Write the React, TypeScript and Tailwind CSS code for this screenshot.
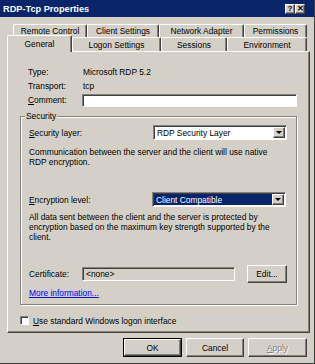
import React from "react";

const raised =
  "border border-t-white border-l-white border-r-[#404040] border-b-[#404040] shadow-[inset_-1px_-1px_0_#808080]";
const sunken =
  "border border-t-[#808080] border-l-[#808080] border-r-white border-b-white shadow-[inset_1px_1px_0_#404040]";

function Tab({ label, w, active }: { label: string; w: string; active?: boolean }) {
  return (
    <div
      className={`${w} ${
        active ? "h-[17px] -mb-px relative z-10" : "h-full"
      } shrink-0 bg-[#d4d0c8] border-t border-l border-r border-t-white border-l-white border-r-[#404040] rounded-t-[2px] shadow-[inset_-1px_0_0_#808080] flex items-center justify-center`}
    >
      {label}
    </div>
  );
}

function Select({ value, highlight }: { value: string; highlight?: boolean }) {
  return (
    <div className={`w-[134px] h-[15px] bg-white ${sunken} flex items-center p-[1px]`}>
      <div className="flex-1 h-full flex items-center">
        <span
          className={`h-full flex items-center pl-[2px] ${
            highlight ? "bg-[#0a246a] text-white w-[118px]" : ""
          }`}
        >
          {value}
        </span>
      </div>
      <div className={`w-[12px] h-full bg-[#d4d0c8] ${raised} flex items-center justify-center`}>
        <div className="w-0 h-0 border-l-[3px] border-r-[3px] border-t-[3px] border-l-transparent border-r-transparent border-t-black" />
      </div>
    </div>
  );
}

function Button({ children, w, def, disabled }: { children: React.ReactNode; w: string; def?: boolean; disabled?: boolean }) {
  return (
    <div className={`${w} h-full ${def ? "border border-black" : ""}`}>
      <div
        className={`w-full h-full ${raised} flex items-center justify-center ${
          disabled ? "text-[#808080] [text-shadow:1px_1px_0_white]" : ""
        }`}
      >
        {children}
      </div>
    </div>
  );
}

export default function App() {
  return (
    <div className="w-[315px] h-[364px] bg-[#d4d0c8] flex flex-col font-['Liberation_Sans',Arial,sans-serif] text-[8.4px] leading-[10px] text-black overflow-hidden border-r border-b border-r-[#404040] border-b-[#404040]">
      {/* Title bar */}
      <div className="h-[17px] shrink-0 bg-[#0a246a] flex items-center justify-between pl-[3px] pr-[9px]">
        <span className="text-white font-bold text-[9.2px]">RDP-Tcp Properties</span>
        <div className="flex gap-0">
          <div className={`w-[10px] h-[10px] bg-[#d4d0c8] ${raised} flex items-center justify-center font-bold text-[8px] leading-none`}>?</div>
          <div className={`w-[10px] h-[10px] bg-[#d4d0c8] ${raised} flex items-center justify-center font-bold text-[8px] leading-none`}>✕</div>
        </div>
      </div>

      {/* Tabs */}
      <div className="mt-[7px] flex flex-col">
        <div className="flex h-[13px] pl-[13px]">
          <Tab label="Remote Control" w="w-[74px]" />
          <Tab label="Client Settings" w="w-[72px]" />
          <Tab label="Network Adapter" w="w-[85px]" />
          <Tab label="Permissions" w="w-[63px]" />
        </div>
        <div className="flex h-[14px] pl-[7px] items-end">
          <Tab label="General" w="w-[65px]" active />
          <Tab label="Logon Settings" w="w-[89px]" />
          <Tab label="Sessions" w="w-[66px]" />
          <Tab label="Environment" w="w-[80px]" />
        </div>
      </div>

      {/* Panel */}
      <div className={`ml-[7px] w-[303px] h-[282px] shrink-0 ${raised} px-[12px] pt-[13px] flex flex-col`}>
        <div className="pl-[8px] flex flex-col">
          <div className="h-[14px] flex items-center">
            <span className="w-[55px]">Type:</span>
            <span>Microsoft RDP 5.2</span>
          </div>
          <div className="h-[14px] flex items-center">
            <span className="w-[55px]">Transport:</span>
            <span>tcp</span>
          </div>
          <div className="h-[14px] flex items-center">
            <span className="w-[54px]">
              <u>C</u>omment:
            </span>
            <div className={`w-[215px] h-[13px] bg-white ${sunken}`} />
          </div>
        </div>

        <fieldset className="border border-[#808080] shadow-[inset_1px_1px_0_white,1px_1px_0_white] p-0 m-0 mt-[4px]">
          <legend className="ml-[4px] px-[1px] bg-[#d4d0c8] h-[10px]">Security</legend>
          <div className="pl-[8px] pr-[9px] pb-[6px] flex flex-col">
            <div className="mt-[4px] h-[15px] flex items-center">
              <span className="w-[124px]">
                <u>S</u>ecurity layer:
              </span>
              <Select value="RDP Security Layer" />
            </div>
            <p className="mt-[7px]">
              Communication between the server and the client will use native
              <br />
              RDP encryption.
            </p>
            <div className="mt-[25px] h-[15px] flex items-center">
              <span className="w-[123px]">
                <u>E</u>ncryption level:
              </span>
              <Select value="Client Compatible" highlight />
            </div>
            <p className="mt-[5px]">
              All data sent between the client and the server is protected by
              <br />
              encryption based on the maximum key strength supported by the
              <br />
              client.
            </p>
            <div className="mt-[23px] h-[18px] flex items-center">
              <span className="w-[53px]">Certificate:</span>
              <div className={`w-[153px] h-[14px] ${sunken} flex items-center pl-[3px]`}>&lt;none&gt;</div>
              <div className="ml-[12px] h-full">
                <Button w="w-[40px]">Edit...</Button>
              </div>
            </div>
            <div className="mt-[5px] h-[10px]">
              <span className="text-[#0000ee] underline">More information...</span>
            </div>
          </div>
        </fieldset>

        <div className="mt-[9px] h-[13px] flex items-center gap-[4px]">
          <div className={`w-[9px] h-[9px] bg-white ${sunken}`} />
          <span>
            <u>U</u>se standard Windows logon interface
          </span>
        </div>
      </div>

      {/* Buttons */}
      <div className="mt-[5px] h-[19px] flex justify-end gap-[4px] pr-[7px]">
        <Button w="w-[59px]" def>
          OK
        </Button>
        <Button w="w-[58px]">Cancel</Button>
        <Button w="w-[59px]" disabled>
          <span>
            <u>A</u>pply
          </span>
        </Button>
      </div>
    </div>
  );
}
